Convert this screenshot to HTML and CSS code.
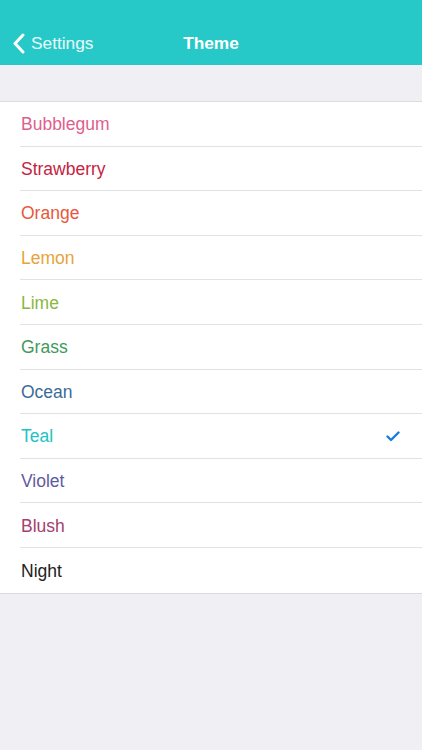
FILE: index.html
```html
<!DOCTYPE html>
<html>
<head>
<meta charset="utf-8">
<link rel="stylesheet" href="styles.css">
</head>
<body>
<header class="nav">
  <div class="back">
    <svg class="chev" width="13" height="21" viewBox="0 0 13 21"><path d="M11 2 L3 10.5 L11 19" fill="none" stroke="#fff" stroke-width="3" stroke-linecap="round" stroke-linejoin="round"/></svg>
    <span>Settings</span>
  </div>
  <div class="title">Theme</div>
</header>
<ul class="list">
  <li class="row"><span class="c-bubblegum">Bubblegum</span></li>
  <li class="row"><span class="c-strawberry">Strawberry</span></li>
  <li class="row"><span class="c-orange">Orange</span></li>
  <li class="row"><span class="c-lemon">Lemon</span></li>
  <li class="row"><span class="c-lime">Lime</span></li>
  <li class="row"><span class="c-grass">Grass</span></li>
  <li class="row"><span class="c-ocean">Ocean</span></li>
  <li class="row"><span class="c-teal">Teal</span>
    <svg class="check" width="14" height="11" viewBox="0 0 14 11"><path d="M1.5 5.5 L5 9 L12.5 1.5" fill="none" stroke="#1b7be2" stroke-width="2.4" stroke-linecap="round" stroke-linejoin="round"/></svg>
  </li>
  <li class="row"><span class="c-violet">Violet</span></li>
  <li class="row"><span class="c-blush">Blush</span></li>
  <li class="row last"><span class="c-night">Night</span></li>
</ul>
</body>
</html>
```
FILE: styles.css
```css
html, body {
  margin: 0;
  padding: 0;
  background: #efeff4;
  font-family: "Liberation Sans", Arial, sans-serif;
  width: 422px;
  height: 750px;
  overflow: hidden;
}
.nav {
  height: 65px;
  background: #26c9c7;
  position: relative;
  color: #fff;
}
.back {
  position: absolute;
  left: 12px;
  top: 33px;
  display: flex;
  align-items: center;
  gap: 6px;
  font-size: 17.3px;
  color: #eafafa;
}
.chev { display: block; }
.title {
  position: absolute;
  left: 0;
  right: 0;
  top: 33px;
  text-align: center;
  font-size: 17.3px;
  font-weight: bold;
}
.list {
  list-style: none;
  margin: 36px 0 0;
  padding: 0 0 0 20px;
  background: #fff;
  border-top: 1px solid #dcdce0;
  border-bottom: 1px solid #dcdce0;
}
.row {
  height: 44.6px;
  box-sizing: border-box;
  border-bottom: 1px solid #e2e2e5;
  display: flex;
  align-items: center;
  justify-content: space-between;
  padding: 2px 22px 0 1px;
  font-size: 17.5px;
}
.row.last { border-bottom: none; }
.check { display: block; }
.c-bubblegum { color: #de5f8e; }
.c-strawberry { color: #c5243f; }
.c-orange { color: #e9573a; }
.c-lemon { color: #e6a43a; }
.c-lime { color: #8bb63f; }
.c-grass { color: #3f9a5c; }
.c-ocean { color: #3a6c98; }
.c-teal { color: #22c3c3; }
.c-violet { color: #5f5b9e; }
.c-blush { color: #a3416f; }
.c-night { color: #222222; }
```
